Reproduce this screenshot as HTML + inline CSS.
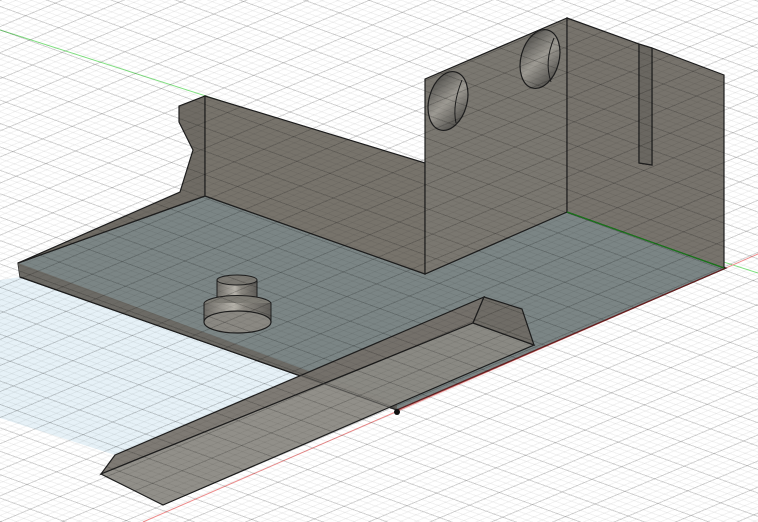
<!DOCTYPE html>
<html><head><meta charset="utf-8"><style>
html,body{margin:0;padding:0;width:758px;height:522px;overflow:hidden;background:#fff}
#wrap{position:relative;width:758px;height:522px}
svg{position:absolute;left:0;top:0}
.grid{position:absolute;left:0;top:0;width:758px;height:522px;pointer-events:none;
background:
repeating-linear-gradient(157deg,rgba(0,0,0,0.13) 0 1px,transparent 1px 24px),
repeating-linear-gradient(20deg,rgba(0,0,0,0.13) 0 1px,transparent 1px 22px),
repeating-linear-gradient(157deg,rgba(0,0,0,0.05) 0 1px,transparent 1px 6px),
repeating-linear-gradient(20deg,rgba(0,0,0,0.05) 0 1px,transparent 1px 5.5px);}
</style></head><body><div id="wrap">
<svg width="758" height="522" viewBox="0 0 758 522">
<defs>
<linearGradient id="cyl" x1="0" x2="1"><stop offset="0" stop-color="#6d6b66"/><stop offset=".45" stop-color="#b5b2aa"/><stop offset=".6" stop-color="#8a8780"/><stop offset="1" stop-color="#5e5c58"/></linearGradient>
<linearGradient id="hole" x1="0" x2="1" y1="0" y2="1"><stop offset="0" stop-color="#3e3d3a"/><stop offset=".5" stop-color="#9d9a93"/><stop offset="1" stop-color="#3a3936"/></linearGradient>
</defs>
<!-- floor blue region -->
<polygon points="0,280 20,277 300,375 115,455 0,418" fill="#e6f1f7"/>
<line x1="0" y1="30" x2="758" y2="273" stroke="#7fe07f" stroke-width="1"/>
<line x1="143" y1="522" x2="758" y2="254" stroke="#ee8c8c" stroke-width="1"/>
<!-- plate -->
<polygon points="18,263 205,196 425,274 567,212 726,268 397,410 20,277" fill="#7b8585" stroke="#1e1e1e" stroke-width="1.2"/>
<polygon points="18,263 20,277 397,410 397,404 " fill="#6c6a65"/>
<line x1="20" y1="277" x2="397" y2="410" stroke="#1e1e1e" stroke-width="1.2"/>
<line x1="397" y1="410" x2="726" y2="268" stroke="#6a2020" stroke-width="1.2"/>
<!-- left wall side with notch -->
<polygon points="179,106 205,96 205,196 18,263 180,192 193,150 179,122" fill="#6f6b64" stroke="#1e1e1e" stroke-width="1.2"/>
<!-- wall front face -->
<polygon points="205,96 425,163 425,274 205,196" fill="#77736b" stroke="#1e1e1e" stroke-width="1.2"/>
<!-- block left face -->
<polygon points="425,79 567,18 567,212 425,274" fill="#7a7770" stroke="#1e1e1e" stroke-width="1.2"/>
<!-- block right face -->
<polygon points="567,18 639,44 639,163 652,165 652,48 724,75 724,268 567,212" fill="#77736c" stroke="#1e1e1e" stroke-width="1.2"/>
<polygon points="639,44 652,48 652,165 639,163" fill="#6a6761" stroke="#1e1e1e" stroke-width="1.2"/>
<line x1="567" y1="212" x2="724" y2="268" stroke="#1a7a1a" stroke-width="1.2"/>
<!-- holes -->
<ellipse cx="448" cy="101" rx="19" ry="30" transform="rotate(15 448 101)" fill="url(#hole)" stroke="#1e1e1e" stroke-width="1.2"/>
<ellipse cx="540" cy="59" rx="19" ry="30" transform="rotate(15 540 59)" fill="url(#hole)" stroke="#1e1e1e" stroke-width="1.2"/>
<path d="M462,80 Q452,105 456,123" fill="none" stroke="#1e1e1e"/>
<path d="M554,38 Q544,62 551,82" fill="none" stroke="#1e1e1e"/>
<!-- boss -->
<rect x="217" y="280" width="40" height="22" fill="url(#cyl)"/>
<ellipse cx="237" cy="280" rx="20" ry="5" fill="#7a7872" stroke="#1e1e1e"/>
<line x1="217" y1="280" x2="217" y2="298" stroke="#1e1e1e"/><line x1="257" y1="280" x2="257" y2="298" stroke="#1e1e1e"/>
<rect x="204" y="303" width="67" height="19" fill="url(#cyl)"/>
<path d="M204,303 A34,9 0 0 1 271,303" fill="#7f7d76" stroke="#1e1e1e"/>
<line x1="204" y1="303" x2="204" y2="322" stroke="#1e1e1e"/><line x1="271" y1="303" x2="271" y2="322" stroke="#1e1e1e"/>
<ellipse cx="237.5" cy="322" rx="33.5" ry="11" fill="#8a8882" stroke="#1e1e1e" stroke-width="1.2"/>
<!-- bar -->
<polygon points="115,455 484,297 473,323 101,474" fill="#736f68" fill-opacity="0.92" stroke="#1e1e1e" stroke-width="1.2"/>
<polygon points="101,474 473,323 534,345 163,505" fill="#8b8983" fill-opacity="0.95" stroke="#1e1e1e" stroke-width="1.2"/>
<polygon points="484,297 522,309 534,345 473,323" fill="#6f6c66" stroke="#1e1e1e" stroke-width="1.2"/>
<line x1="300" y1="375" x2="397" y2="410" stroke="#333" stroke-width="1" opacity="0.6"/>
<circle cx="397" cy="412" r="3" fill="#111"/>
</svg>
<div class="grid"></div>
</div></body></html>
